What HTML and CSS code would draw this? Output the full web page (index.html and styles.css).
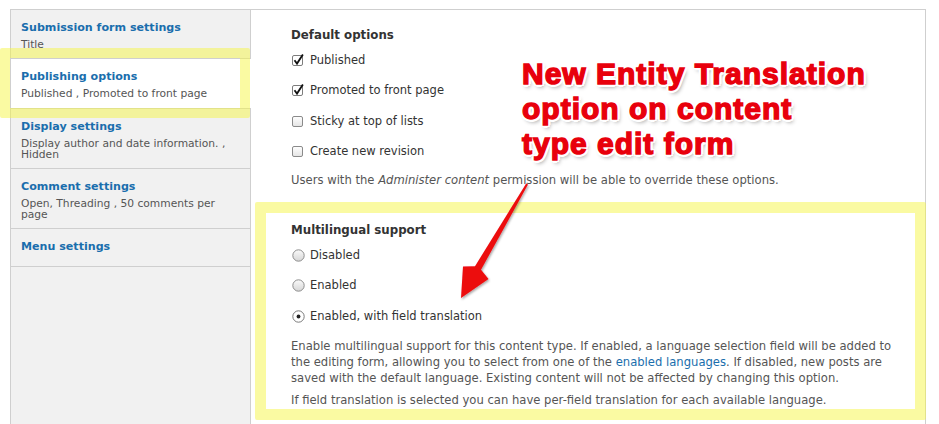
FILE: index.html
```html
<!DOCTYPE html>
<html>
<head>
<meta charset="utf-8">
<link rel="stylesheet" href="styles.css">
</head>
<body>
<div class="page">
  <div class="tabs">
    <ul class="tab-list">
      <li class="tab"><a class="tab-title">Submission form settings</a><span class="tab-summary">Title</span></li>
      <li class="tab tab-selected"><a class="tab-title">Publishing options</a><span class="tab-summary">Published , Promoted to front page</span></li>
      <li class="tab"><a class="tab-title">Display settings</a><span class="tab-summary">Display author and date information. , Hidden</span></li>
      <li class="tab"><a class="tab-title">Comment settings</a><span class="tab-summary">Open, Threading , 50 comments per page</span></li>
      <li class="tab tab-last"><a class="tab-title">Menu settings</a></li>
    </ul>
    <div class="pane">
      <h3 class="group-title">Default options</h3>
      <div class="opt opt-first"><span class="cb"><svg width="13" height="13" viewBox="0 0 13 13"><rect x="0.5" y="1.5" width="10" height="10" rx="1.5" fill="#fff" stroke="#7d7d7d"/><path d="M2.5 6.3 L5 9.6 L10.9 0.6" fill="none" stroke="#111" stroke-width="1.8"/></svg></span>Published</div>
      <div class="opt"><span class="cb"><svg width="13" height="13" viewBox="0 0 13 13"><rect x="0.5" y="1.5" width="10" height="10" rx="1.5" fill="#fff" stroke="#7d7d7d"/><path d="M2.5 6.3 L5 9.6 L10.9 0.6" fill="none" stroke="#111" stroke-width="1.8"/></svg></span>Promoted to front page</div>
      <div class="opt opt-3"><span class="cb"><svg width="13" height="13" viewBox="0 0 13 13"><defs><linearGradient id="g1" x1="0" y1="0" x2="0" y2="1"><stop offset="0" stop-color="#fff"/><stop offset="1" stop-color="#e4e4e4"/></linearGradient></defs><rect x="0.5" y="1.5" width="10" height="10" rx="1.5" fill="url(#g1)" stroke="#8a8a8a"/></svg></span>Sticky at top of lists</div>
      <div class="opt"><span class="cb"><svg width="13" height="13" viewBox="0 0 13 13"><rect x="0.5" y="1.5" width="10" height="10" rx="1.5" fill="url(#g1)" stroke="#8a8a8a"/></svg></span>Create new revision</div>
      <p class="desc desc-default">Users with the <em>Administer content</em> permission will be able to override these options.</p>

      <h3 class="group-title group-ml">Multilingual support</h3>
      <div class="opt opt-first"><span class="rb"><svg width="13" height="13" viewBox="0 0 13 13"><defs><linearGradient id="g2" x1="0" y1="0" x2="0" y2="1"><stop offset="0" stop-color="#fafafa"/><stop offset="1" stop-color="#d6d6d6"/></linearGradient></defs><circle cx="6.5" cy="6.5" r="5.7" fill="url(#g2)" stroke="#8d8d8d"/></svg></span>Disabled</div>
      <div class="opt"><span class="rb"><svg width="13" height="13" viewBox="0 0 13 13"><circle cx="6.5" cy="6.5" r="5.7" fill="url(#g2)" stroke="#8d8d8d"/></svg></span>Enabled</div>
      <div class="opt opt-3"><span class="rb"><svg width="13" height="13" viewBox="0 0 13 13"><circle cx="6.5" cy="6.5" r="5.7" fill="#fff" stroke="#7a7a7a"/><circle cx="6.5" cy="6.5" r="1.9" fill="#222"/></svg></span>Enabled, with field translation</div>
      <p class="desc desc-ml">Enable multilingual support for this content type. If enabled, a language selection field will be added to the editing form, allowing you to select from one of the <a class="link">enabled languages</a>. If disabled, new posts are saved with the default language. Existing content will not be affected by changing this option.</p>
      <p class="desc desc-last">If field translation is selected you can have per-field translation for each available language.</p>
    </div>
  </div>

  <div class="hl hl-tab"></div>
  <div class="hl hl-pane"></div>

  <div class="note">New Entity Translation<br>option on content<br>type edit form</div>

  <svg class="arrow" width="939" height="424" viewBox="0 0 939 424">
    <defs>
      <filter id="sh" x="-20%" y="-20%" width="140%" height="140%">
        <feDropShadow dx="1" dy="1.5" stdDeviation="1.2" flood-color="#000" flood-opacity="0.35"/>
      </filter>
    </defs>
    <polygon points="528,184.6 481,269.8 488.5,279 461,298 463,266.5 475,266.2 526.2,183.4" fill="#ec0a0f" filter="url(#sh)"/>
  </svg>
</div>
</body>
</html>
```

FILE: styles.css
```css
html, body {
  margin: 0;
  padding: 0;
  background: #fff;
}

body {
  font-family: "DejaVu Sans", Verdana, sans-serif;
  color: #333;
  overflow: hidden;
}

.page {
  position: relative;
  width: 939px;
  height: 424px;
  box-sizing: border-box;
  padding: 9px 13px 0 10px;
}

.tabs {
  display: flex;
  height: 100%;
  border-top: 1px solid #cfcfcf;
}

.tab-list {
  list-style: none;
  margin: 0;
  padding: 0;
  width: 241px;
  flex: none;
  box-sizing: border-box;
  background: #f1f1f1;
  border-left: 1px solid #cfcfcf;
  border-right: 1px solid #cfcfcf;
}

.tab {
  display: block;
  padding: 10px 10px 8px 10px;
  border-bottom: 1px solid #cfcfcf;
}

.tab-selected {
  background: #fff;
  margin-right: -1px;
  position: relative;
  padding-bottom: 9px;
}

.tab-last {
  padding-bottom: 11px;
}

.tab-title {
  display: block;
  font-weight: bold;
  font-size: 11.1px;
  line-height: 16px;
  color: #1a6ead;
}

.tab-summary {
  display: block;
  margin-top: 3px;
  font-size: 10.7px;
  line-height: 11px;
  color: #555;
}

.pane {
  flex: 1;
  border-right: 1px solid #cfcfcf;
  padding: 17px 14px 0 40px;
}

.group-title {
  margin: 0;
  font-size: 11.8px;
  line-height: 16px;
  font-weight: bold;
  color: #333;
}

.group-ml {
  margin-top: 34px;
}

.opt {
  display: flex;
  align-items: center;
  height: 16px;
  margin-top: 14px;
  font-size: 11.5px;
  line-height: 16px;
  color: #333;
}

.opt-first {
  margin-top: 9px;
}

.opt-3 {
  margin-top: 15px;
}

.cb, .rb {
  display: inline-flex;
  width: 13px;
  height: 13px;
  margin: 0 5px 0 1px;
}

.cb svg, .rb svg {
  display: block;
}

.desc {
  margin: 0;
  font-size: 11.6px;
  line-height: 16px;
  color: #555;
}

.desc-default {
  margin-top: 13px;
}

.desc-ml {
  margin-top: 14px;
}

.desc-last {
  margin-top: 6px;
}

.link {
  color: #1a6ead;
}

.hl {
  position: absolute;
  box-sizing: border-box;
  border-style: solid;
  border-color: rgba(246, 246, 70, 0.5);
  border-radius: 2px;
}

.hl-tab {
  left: 0;
  top: 48px;
  width: 250px;
  height: 70px;
  border-width: 10px;
}

.hl-pane {
  left: 255px;
  top: 202px;
  width: 671px;
  height: 218px;
  border-width: 11px;
}

.note {
  position: absolute;
  left: 522px;
  top: 56px;
  font-family: "Liberation Sans", Arial, sans-serif;
  font-weight: bold;
  font-size: 30px;
  line-height: 35px;
  letter-spacing: 1px;
  color: #e8000c;
  white-space: nowrap;
  -webkit-text-stroke: 1.4px #e8000c;
  text-shadow:
    3px 0 0 #fff, -3px 0 0 #fff, 0 3px 0 #fff, 0 -3px 0 #fff,
    2.2px 2.2px 0 #fff, -2.2px -2.2px 0 #fff, 2.2px -2.2px 0 #fff, -2.2px 2.2px 0 #fff,
    2px 3px 4px rgba(0, 0, 0, 0.45);
}

.arrow {
  position: absolute;
  left: 0;
  top: 0;
  pointer-events: none;
}
```
